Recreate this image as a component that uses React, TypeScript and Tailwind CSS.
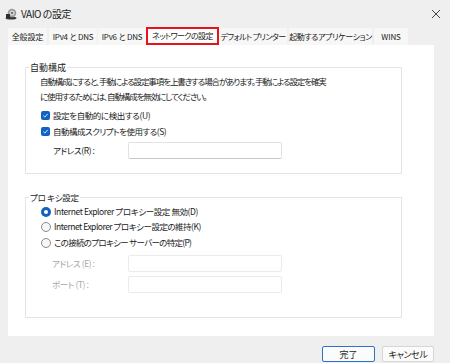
import React from "react";

const tabs: { t: string; cls: string }[] = [
  { t: "全般設定", cls: "w-[39px] ml-0 tracking-[-0.1px]" },
  { t: "IPv4 と DNS", cls: "w-[48px] ml-[2px] tracking-[-0.2px]" },
  { t: "IPv6 と DNS", cls: "w-[48px] ml-[1px] tracking-[-0.2px]" },
  { t: "ネットワークの設定", cls: "w-[73px] ml-0 tracking-[-0.6px]" },
  { t: "デフォルト プリンター", cls: "w-[68px] ml-0 tracking-[-0.6px]" },
  { t: "起動するアプリケーション", cls: "w-[83px] ml-[2px] tracking-[-0.4px]" },
  { t: "WINS", cls: "w-[34px] ml-[2px] tracking-[-0.1px]" },
];

function Check() {
  return (
    <span className="w-[9px] h-[9px] rounded-[2px] bg-[#0f62c4] flex items-center justify-center shrink-0">
      <svg width="7" height="7" viewBox="0 0 8 8">
        <path d="M1.5 4.2 L3.2 5.8 L6.5 2.2" stroke="white" strokeWidth="1" fill="none" />
      </svg>
    </span>
  );
}

function Radio({ on }: { on?: boolean }) {
  return on ? (
    <span className="w-[10px] h-[10px] rounded-full bg-[#0f62c4] flex items-center justify-center shrink-0">
      <span className="w-[4px] h-[4px] rounded-full bg-white" />
    </span>
  ) : (
    <span className="w-[10px] h-[10px] rounded-full border border-[#8a8a8a] bg-[#f7f7f7] shrink-0" />
  );
}

export default function App() {
  return (
    <div className="w-[450px] h-[363px] bg-[#efefef] flex flex-col font-['Noto_Sans_CJK_JP',sans-serif] text-[8.5px] text-[#1b1b1b] [font-feature-settings:'palt'] overflow-hidden">
      {/* title bar */}
      <div className="h-[28px] flex items-center pl-[5px] pr-[9px] shrink-0">
        <svg width="12" height="12" viewBox="0 0 12 12" className="shrink-0">
          <ellipse cx="6" cy="10" rx="5.5" ry="1.6" fill="#3a3a3a" />
          <circle cx="7" cy="5" r="4.3" fill="#9a9a9a" />
          <circle cx="7" cy="5" r="2.6" fill="#d6d6d6" />
          <circle cx="7" cy="5" r="1.1" fill="#5a5a5a" />
          <rect x="1" y="6" width="4" height="4" fill="#2e2e2e" />
        </svg>
        <span className="ml-[4px] text-[10px] leading-none tracking-[-0.5px]">VAIO の設定</span>
        <div className="flex-1" />
        <svg width="10" height="10" viewBox="0 0 10 10">
          <path d="M1 1 L9 9 M9 1 L1 9" stroke="#333" strokeWidth="0.9" />
        </svg>
      </div>

      {/* tabs */}
      <div className="h-[17px] flex items-stretch pl-[8px] shrink-0 text-[8px]">
        {tabs.map((tab, i) =>
          i === 3 ? (
            <div
              key={tab.t}
              className={`${tab.cls} flex items-center justify-center bg-white border-2 border-[#e8131b] -mt-[1px] h-[18px] relative z-10 whitespace-nowrap`}
            >
              {tab.t}
            </div>
          ) : (
            <div
              key={tab.t}
              className={`${tab.cls} flex items-center justify-center bg-[#f7f7f7] whitespace-nowrap`}
            >
              {tab.t}
            </div>
          )
        )}
      </div>

      {/* panel */}
      <div className="ml-[8px] w-[426px] h-[291px] bg-white pt-[22px] pl-[17px] shrink-0">
        {/* group 1 */}
        <div className="relative w-[377px] h-[107px] border border-[#e4e4e4] pt-[6px] pl-[14px]">
          <span className="absolute -top-[8px] left-[3px] bg-white px-[1px] leading-[15px] text-[9px]">自動構成</span>
          <div className="leading-[15px] tracking-[-1.1px] whitespace-nowrap">
            自動構成にすると、手動による設定事項を上書きする場合があります。手動による設定を確実
            <br />
            に使用するためには、自動構成を無効にしてください。
          </div>
          <div className="mt-[4px] flex items-center gap-[3px] h-[15px] pl-[1px]">
            <Check />
            <span className="tracking-[-0.4px]">設定を自動的に検出する(U)</span>
          </div>
          <div className="mt-[1px] flex items-center gap-[3px] h-[15px] pl-[1px]">
            <Check />
            <span className="tracking-[-0.5px]">自動構成スクリプトを使用する(S)</span>
          </div>
          <div className="mt-[3px] flex items-center pl-[13px]">
            <span className="w-[75px] tracking-[-0.4px]">アドレス(R) :</span>
            <div className="w-[154px] h-[17px] border border-[#e2e2e2] border-b-[#c9c9c9] rounded-[2px]" />
          </div>
        </div>

        {/* group 2 */}
        <div className="relative mt-[23px] w-[377px] h-[121px] border border-[#e4e4e4] pt-[6px] pl-[15px]">
          <span className="absolute -top-[8px] left-[3px] bg-white px-[1px] leading-[15px] tracking-[-0.3px]">プロ キシ設定</span>
          <div className="flex items-center gap-[3px] h-[15px]">
            <Radio on />
            <span className="tracking-[-0.4px]">Internet Explorer プロキシー設定 無効(D)</span>
          </div>
          <div className="mt-[0px] flex items-center gap-[3px] h-[15px]">
            <Radio />
            <span className="tracking-[-0.5px]">Internet Explorer プロキシー設定の維持(K)</span>
          </div>
          <div className="mt-[1px] flex items-center gap-[3px] h-[15px]">
            <Radio />
            <span className="tracking-[-0.7px]">この接続のプロキシー サーバーの特定(P)</span>
          </div>
          <div className="mt-[5px] flex items-center pl-[11px] text-[#a8a8a8]">
            <span className="w-[76px] tracking-[-0.4px]">アドレス (E) :</span>
            <div className="w-[154px] h-[17px] border border-[#ebebeb] rounded-[2px]" />
          </div>
          <div className="mt-[4px] flex items-center pl-[11px] text-[#a8a8a8]">
            <span className="w-[76px] tracking-[-0.4px]">ポート (T) :</span>
            <div className="w-[154px] h-[17px] border border-[#ebebeb] rounded-[2px]" />
          </div>
        </div>
      </div>

      {/* footer */}
      <div className="mt-[10px] flex justify-end gap-[7px] pr-[16px]">
        <button className="w-[53px] h-[16px] rounded-[2px] border border-[#2b73c9] bg-[#fbfbfb] flex items-center justify-center text-[9px] leading-none">
          完了
        </button>
        <button className="w-[52px] h-[16px] rounded-[2px] border border-[#d6d6d6] bg-[#fbfbfb] flex items-center justify-center text-[9px] leading-none tracking-[-0.4px]">
          キャンセル
        </button>
      </div>
    </div>
  );
}
